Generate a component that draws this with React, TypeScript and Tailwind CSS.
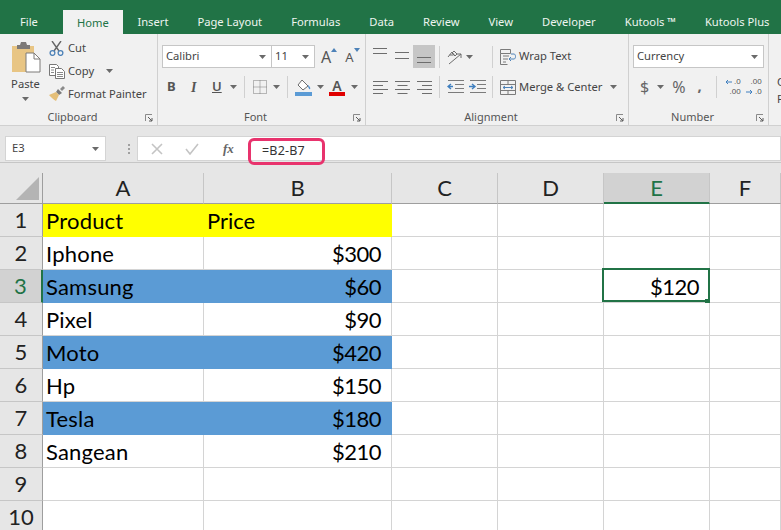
import React from "react";

const tabs = ["Insert", "Page Layout", "Formulas", "Data", "Review", "View", "Developer", "Kutools ™", "Kutools Plus"];

const rows: { a: string; b: string; e?: string; fill?: string }[] = [
  { a: "Product", b: "", fill: "bg-[#ffff00]" },
  { a: "Iphone", b: "$300" },
  { a: "Samsung", b: "$60", e: "$120", fill: "bg-[#5b9bd5]" },
  { a: "Pixel", b: "$90" },
  { a: "Moto", b: "$420", fill: "bg-[#5b9bd5]" },
  { a: "Hp", b: "$150" },
  { a: "Tesla", b: "$180", fill: "bg-[#5b9bd5]" },
  { a: "Sangean", b: "$210" },
  { a: "", b: "" },
  { a: "", b: "" },
];

const sheetFont = "font-['Lato',sans-serif]";

function Caret({ className = "" }: { className?: string }) {
  return (
    <svg width="7" height="4" viewBox="0 0 7 4" className={`shrink-0 ${className}`}>
      <path d="M0 0h7L3.5 4z" fill="#6a6a6a" />
    </svg>
  );
}

function Launcher() {
  return (
    <svg width="8" height="8" viewBox="0 0 8 8" className="mr-[4px] mt-[1px] shrink-0">
      <path d="M.5 7V.5H7" fill="none" stroke="#8a8a8a" />
      <path d="M3 3l4 4M7 4v3H4" fill="none" stroke="#5a5a5a" />
    </svg>
  );
}

function Group({ label, width, children }: { label: string; width: string; children: React.ReactNode }) {
  return (
    <div className={`${width} flex h-full shrink-0 flex-col border-r border-[#d0d0d0]`}>
      <div className="h-[75px]">{children}</div>
      <div className="flex h-[17px] items-center pt-[2px] text-[11px] text-[#555]">
        <span className="flex-1 text-center">{label}</span>
        <Launcher />
      </div>
    </div>
  );
}

function Divider({ className = "" }: { className?: string }) {
  return <div className={`h-[22px] w-px shrink-0 bg-[#d0d0d0] ${className}`} />;
}

function Lines({ kind }: { kind: "top" | "middle" | "bottom" | "left" | "center" | "right" }) {
  const paths: Record<string, string> = {
    top: "M1 .5h14M1 5.5h14",
    middle: "M1 4.5h14M1 10.5h14",
    bottom: "M1 9.5h14M1 14.5h14",
    left: "M1 2.5h15M1 6.5h10M1 10.5h15M1 14.5h10",
    center: "M1 2.5h15M3.5 6.5h10M1 10.5h15M3.5 14.5h10",
    right: "M1 2.5h15M6 6.5h10M1 10.5h15M6 14.5h10",
  };
  return (
    <svg width="17" height="17" viewBox="0 0 17 17">
      <path d={paths[kind]} stroke="#6d6d6d" fill="none" />
    </svg>
  );
}

function PasteIcon() {
  return (
    <svg width="30" height="31" viewBox="0 0 30 31">
      <path d="M1 4h22v26H1z" fill="#e8c584" />
      <path d="M6 3h3l1-3h5l1 3h3v4H6z" fill="#7d7a78" />
      <path d="M15 11h8l6 6v13H15z" fill="#fff" stroke="#7d7a78" />
      <path d="M23 11v6h6" fill="none" stroke="#7d7a78" />
    </svg>
  );
}

function CutIcon() {
  return (
    <svg width="15" height="15" viewBox="0 0 15 15">
      <path d="M3 0l7 10M12 0L5 10" stroke="#666" strokeWidth="1.4" fill="none" />
      <circle cx="3.5" cy="12" r="2.4" fill="none" stroke="#4d82b8" strokeWidth="1.3" />
      <circle cx="11.5" cy="12" r="2.4" fill="none" stroke="#4d82b8" strokeWidth="1.3" />
    </svg>
  );
}

function CopyIcon() {
  return (
    <svg width="16" height="15" viewBox="0 0 16 15">
      <path d="M.5.5h7l2 2v9h-9z" fill="#fff" stroke="#777" />
      <path d="M6.5 4.5h6l3 3v7h-9z" fill="#fff" stroke="#777" />
      <path d="M2 3.5h4M2 6h3M2 8.5h3M8 8.5h6M8 10.5h6M8 12.5h6" stroke="#8a8a8a" />
    </svg>
  );
}

function BrushIcon() {
  return (
    <svg width="16" height="16" viewBox="0 0 16 16">
      <path d="M9 3l4 4-3 2-3-3z" fill="#7a7a7a" />
      <path d="M11 3l3-3 2 2-3 3z" fill="#8a8a8a" />
      <path d="M7 6l3 3-3 6c-2-1-5-4-7-6z" fill="#e5bf78" />
    </svg>
  );
}

function BordersIcon() {
  return (
    <svg width="14" height="14" viewBox="0 0 14 14">
      <path d="M.5.5h13v13H.5zM7 .5v13M.5 7h13" fill="none" stroke="#7b7b7b" strokeDasharray="1 1" />
    </svg>
  );
}

function FillIcon() {
  return (
    <svg width="17" height="17" viewBox="0 0 17 17">
      <path d="M7 1l6 6-5 4-5-5z" fill="#fff" stroke="#6d6d6d" />
      <path d="M13 6c1.5 1.5 3 3 2 4s-2-2-2-4z" fill="#4d8fd0" />
      <path d="M0 13h17v4H0z" fill="#5b9bd5" />
    </svg>
  );
}

function WrapIcon() {
  return (
    <svg width="16" height="16" viewBox="0 0 16 16">
      <path d="M.5.5h10v4H.5zM.5 4.5v11h7M3 7h6M3 10h5M3 13h3" fill="none" stroke="#7b7b7b" />
      <path d="M11 5h3c2 0 2 5 0 5H9M11 8l-2 2 2 2" fill="none" stroke="#4d82b8" />
    </svg>
  );
}

function MergeIcon() {
  return (
    <svg width="16" height="15" viewBox="0 0 16 15">
      <path d="M.5.5h15v14H.5zM.5 4.5h15M.5 10.5h15M8 .5v4M8 10.5v4" fill="none" stroke="#7b7b7b" />
      <path d="M3 7.5h10M3 7.5l2-1.5M3 7.5L5 9M13 7.5L11 6M13 7.5L11 9" fill="none" stroke="#4d82b8" />
    </svg>
  );
}

function OrientationIcon() {
  return (
    <svg width="16" height="16" viewBox="0 0 16 16">
      <path d="M1 8l4-5 3 4M2.5 6h4M7 2l3 3-2 2-3-3z" fill="none" stroke="#6d6d6d" />
      <path d="M2 15L14 5M14 5h-4M14 5v4" fill="none" stroke="#6d6d6d" />
    </svg>
  );
}

function IndentIcon({ flip }: { flip?: boolean }) {
  return (
    <svg width="17" height="14" viewBox="0 0 17 14">
      <path d="M1 .5h16M8 4.5h9M8 8.5h9M1 12.5h16" stroke="#7b7b7b" fill="none" />
      <path d={flip ? "M0 6.5h5M3 4l3 2.5L3 9" : "M6 6.5H1M4 4L1 6.5 4 9"} stroke="#3f7fbf" strokeWidth="1.4" fill="none" />
    </svg>
  );
}

function DecimalIcon({ more }: { more?: boolean }) {
  return (
    <div className="relative flex h-[20px] w-[16px] flex-col items-end font-['Liberation_Sans',sans-serif] text-[8px] leading-[10px] text-[#555]">
      <span>{more ? ".0" : ".00"}</span>
      <span>{more ? ".00" : ".0"}</span>
      <svg width="7" height="6" viewBox="0 0 7 6" className={`absolute left-0 ${more ? "top-[2px]" : "top-[12px]"}`}>
        <path d={more ? "M7 3H1M3 1L1 3l2 2" : "M0 3h6M4 1l2 2-2 2"} fill="none" stroke="#3f7fbf" />
      </svg>
    </div>
  );
}

function Clipboard() {
  return (
    <div className="flex h-full">
      <div className="flex w-[49px] flex-col items-center pl-[2px] pt-[8px]">
        <PasteIcon />
        <span className="mt-[3px] text-[11.2px] leading-[16px] text-[#444]">Paste</span>
        <Caret className="mt-[5px]" />
      </div>
      <div className="flex flex-col gap-[7px] pt-[6px] text-[11.2px] leading-[16px] text-[#444]">
        <div className="flex items-center gap-[4px]">
          <CutIcon />
          <span>Cut</span>
        </div>
        <div className="flex items-center gap-[3px]">
          <CopyIcon />
          <span>Copy</span>
          <Caret className="ml-[9px]" />
        </div>
        <div className="flex items-center gap-[3px]">
          <BrushIcon />
          <span>Format Painter</span>
        </div>
      </div>
    </div>
  );
}

function Font() {
  return (
    <div className="flex flex-col pl-[4px] pt-[11px]">
      <div className="flex h-[23px] items-center">
        <div className="flex h-full w-[110px] items-center justify-between border border-[#c6c6c6] bg-white pl-[3px] pr-[5px] text-[11.2px] text-[#444]">
          Calibri
          <Caret />
        </div>
        <div className="-ml-px flex h-full w-[44px] items-center justify-between border border-[#c6c6c6] bg-white pl-[3px] pr-[5px] text-[11.2px] text-[#444]">
          11
          <Caret />
        </div>
        <span className="ml-[6px] text-[16px] leading-none text-[#555]">A</span>
        <svg width="6" height="4" viewBox="0 0 6 4" className="mb-[14px]"><path d="M0 4l3-4 3 4z" fill="#4d82b8" /></svg>
        <span className="ml-[8px] mt-[2px] text-[13px] leading-none text-[#555]">A</span>
        <svg width="6" height="4" viewBox="0 0 6 4" className="mb-[14px]"><path d="M0 0l3 4 3-4z" fill="#4d82b8" /></svg>
      </div>
      <div className="mt-[8px] flex h-[22px] items-center text-[#555]">
        <span className="ml-[5px] w-[20px] text-[13px] font-bold">B</span>
        <span className="ml-[4px] w-[20px] font-['Liberation_Serif',serif] text-[14px] font-bold italic">I</span>
        <span className="ml-[1px] w-[17px] text-[13px] font-semibold underline">U</span>
        <Caret className="ml-[1px]" />
        <Divider className="ml-[7px]" />
        <span className="ml-[8px]"><BordersIcon /></span>
        <Caret className="ml-[6px]" />
        <Divider className="ml-[7px]" />
        <span className="ml-[7px]"><FillIcon /></span>
        <Caret className="ml-[5px]" />
        <div className="ml-[5px] flex w-[16px] flex-col items-center">
          <span className="text-[14px] font-semibold leading-[13px]">A</span>
          <span className="h-[4px] w-full bg-[#e00000]" />
        </div>
        <Caret className="ml-[6px]" />
      </div>
    </div>
  );
}

function Alignment() {
  return (
    <div className="flex flex-col pl-[3px] pt-[11px]">
      <div className="flex h-[23px] items-center">
        <div className="flex w-[22px] justify-center"><Lines kind="top" /></div>
        <div className="flex w-[22px] justify-center"><Lines kind="middle" /></div>
        <div className="flex h-full w-[22px] items-center justify-center bg-[#c6c6c6]"><Lines kind="bottom" /></div>
        <Divider className="ml-[4px]" />
        <span className="ml-[7px]"><OrientationIcon /></span>
        <Caret className="ml-[3px]" />
        <Divider className="ml-[19px]" />
        <span className="ml-[7px]"><WrapIcon /></span>
        <span className="ml-[3px] text-[11.2px] text-[#444]">Wrap Text</span>
      </div>
      <div className="mt-[8px] flex h-[22px] items-center">
        <div className="flex w-[22px] justify-center"><Lines kind="left" /></div>
        <div className="flex w-[22px] justify-center"><Lines kind="center" /></div>
        <div className="flex w-[22px] justify-center"><Lines kind="right" /></div>
        <Divider className="ml-[4px]" />
        <span className="ml-[7px]"><IndentIcon /></span>
        <span className="ml-[5px]"><IndentIcon flip /></span>
        <Divider className="ml-[6px]" />
        <span className="ml-[7px]"><MergeIcon /></span>
        <span className="ml-[3px] text-[11.2px] text-[#444]">Merge &amp; Center</span>
        <Caret className="ml-[8px]" />
      </div>
    </div>
  );
}

function NumberGroup() {
  return (
    <div className="flex flex-col pl-[4px] pt-[11px]">
      <div className="flex h-[23px] w-[131px] items-center justify-between border border-[#c6c6c6] bg-white pl-[3px] pr-[5px] text-[11.2px] text-[#444]">
        Currency
        <Caret />
      </div>
      <div className="mt-[8px] flex h-[22px] items-center text-[#666]">
        <span className="ml-[7px] text-[16px]">$</span>
        <Caret className="ml-[8px]" />
        <span className="ml-[8px] text-[16px]">%</span>
        <span className="mb-[4px] ml-[12px] text-[15px] font-bold leading-none">,</span>
        <Divider className="ml-[14px]" />
        <span className="ml-[8px]"><DecimalIcon more /></span>
        <span className="ml-[5px]"><DecimalIcon /></span>
      </div>
    </div>
  );
}

export default function App() {
  return (
    <div className="h-[530px] w-[781px] overflow-hidden bg-[#e6e6e6] font-['Noto_Sans',sans-serif]">
      {/* title tabs */}
      <div className="flex h-[34px] items-end overflow-hidden bg-[#217346] pl-[5px] text-[11.2px] leading-[25px] text-[#eef5f0]">
        <div className="shrink-0 px-[15px]">File</div>
        <div className="ml-[10px] h-[24px] w-[60px] shrink-0 bg-[#f1f1f1] text-center text-[#217346]">Home</div>
        {tabs.map((t) => (
          <div key={t} className="shrink-0 whitespace-nowrap px-[14.5px] first:pl-[15px]">{t}</div>
        ))}
      </div>

      {/* ribbon */}
      <div className="flex h-[92px] items-stretch overflow-hidden border-b border-[#d0d0d0] bg-[#f1f1f1]">
        <Group label="Clipboard" width="w-[158px]"><Clipboard /></Group>
        <Group label="Font" width="w-[208px]"><Font /></Group>
        <Group label="Alignment" width="w-[263px]"><Alignment /></Group>
        <Group label="Number" width="w-[140px]"><NumberGroup /></Group>
        <div className="flex flex-col pl-[8px] pt-[39px] text-[11.2px] leading-[17px] text-[#444]">
          <span>C</span>
          <span>F</span>
        </div>
      </div>

      {/* formula bar */}
      <div className="flex h-[37px] items-start border-b border-[#c6c6c6] pt-[10px]">
        <div className="ml-[5px] flex h-[25px] w-[101px] items-center justify-between border border-[#d4d4d4] bg-white pl-[6px] pr-[6px] text-[11.2px] text-[#444]">
          E3
          <Caret />
        </div>
        <div className="ml-[15px] flex h-[25px] w-[16px] flex-col items-center justify-center gap-[2px]">
          <span className="h-[2px] w-[2px] bg-[#a0a0a0]" />
          <span className="h-[2px] w-[2px] bg-[#a0a0a0]" />
          <span className="h-[2px] w-[2px] bg-[#a0a0a0]" />
        </div>
        <div className="flex h-[25px] w-[110px] items-center border border-r-0 border-[#d4d4d4] bg-white">
          <svg width="12" height="12" viewBox="0 0 12 12" className="ml-[13px]"><path d="M1 1l10 10M11 1L1 11" stroke="#c4c4c4" strokeWidth="1.6" /></svg>
          <svg width="14" height="12" viewBox="0 0 14 12" className="ml-[22px]"><path d="M1 6l4 5 8-10" fill="none" stroke="#c4c4c4" strokeWidth="1.6" /></svg>
          <span className="ml-[24px] font-['Liberation_Serif',serif] text-[13px] font-bold italic text-[#666]">fx</span>
        </div>
        <div className="h-[25px] flex-1 border border-l-0 border-[#d4d4d4] bg-white">
          <div className="ml-px mt-px flex h-[27px] w-[77px] items-center rounded-[6px] border-[3px] border-[#e8336d] pl-[11px] text-[12.5px] tracking-[0.2px] text-[#333]">
            =B2-B7
          </div>
        </div>
      </div>

      {/* sheet */}
      <div className={`mt-[10px] grid grid-cols-[43px_161px_188px_106px_106px_106px_71px] grid-rows-[31px_repeat(10,33px)] text-[22px] leading-none text-black ${sheetFont}`}>
        <div className="flex items-end justify-end border-b border-r border-[#9e9e9e] bg-[#e6e6e6] pb-[3px] pr-[3px]">
          <svg width="23" height="23" viewBox="0 0 23 23"><path d="M23 0v23H0z" fill="#b4b4b4" /></svg>
        </div>
        {["A", "B", "C", "D", "E", "F"].map((c) => (
          <div
            key={c}
            className={
              c === "E"
                ? "flex items-center justify-center border-b-2 border-r border-[#217346] border-r-[#c6c6c6] bg-[#d2d2d2] text-[#217346]"
                : "flex items-center justify-center border-b border-r border-b-[#9e9e9e] border-r-[#c6c6c6] bg-[#e6e6e6] text-[#222]"
            }
          >
            {c}
          </div>
        ))}
        {rows.map((r, i) => (
          <React.Fragment key={i}>
            <div
              className={
                i === 2
                  ? "flex items-center justify-center border-b border-r-2 border-b-[#c6c6c6] border-r-[#217346] bg-[#d2d2d2] text-[#217346]"
                  : "flex items-center justify-center border-b border-r border-b-[#c6c6c6] border-r-[#9e9e9e] bg-[#e6e6e6] text-[#222]"
              }
            >
              {i + 1}
            </div>
            <div className={`flex items-center border-b border-r pl-[3px] pt-[2px] tracking-[0.2px] ${r.fill ? `${r.fill} border-transparent` : "border-[#d4d4d4] bg-white"}`}>
              {r.a}
            </div>
            <div className={`flex items-center border-b border-r pt-[2px] ${i === 0 ? "justify-start pl-[3px]" : "justify-end pr-[10px] tracking-[-0.5px]"} ${r.fill ? `${r.fill} border-transparent` : "border-[#d4d4d4] bg-white"}`}>
              {i === 0 ? "Price" : r.b}
            </div>
            <div className="border-b border-r border-[#d4d4d4] bg-white" />
            <div className="border-b border-r border-[#d4d4d4] bg-white" />
            <div className="relative flex items-center justify-end border-b border-r border-[#d4d4d4] bg-white pr-[10px] pt-[2px] tracking-[-0.5px]">
              {r.e}
              {r.e && (
                <>
                  <div className="absolute -left-[2px] -right-px -top-[2px] bottom-0 border-2 border-[#217346]" />
                  <div className="absolute -bottom-[2px] -right-px h-[5px] w-[5px] bg-[#217346]" />
                </>
              )}
            </div>
            <div className="border-b border-r border-[#d4d4d4] bg-white" />
          </React.Fragment>
        ))}
      </div>
    </div>
  );
}
